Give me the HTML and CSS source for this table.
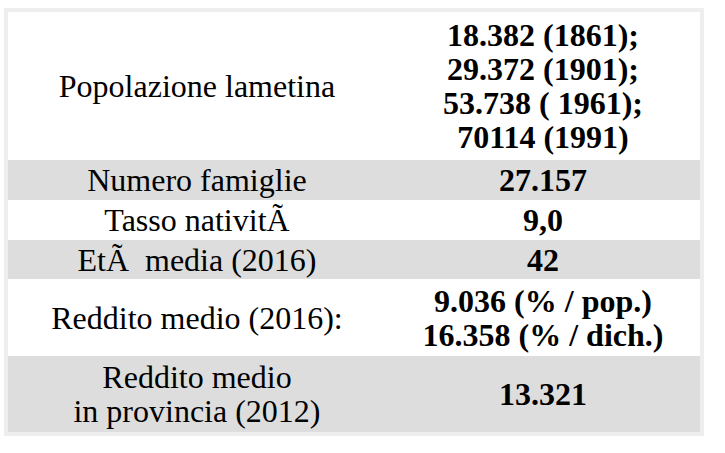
FILE: index.html
```html
<!DOCTYPE html>
<html lang="it">
<head>
<meta charset="utf-8">
<title>Lamezia Terme - dati</title>
<link rel="stylesheet" href="styles.css">
</head>
<body>
<div class="frame">
  <table class="data">
    <colgroup><col class="c-label"><col class="c-value"></colgroup>
    <tr class="r1">
      <td class="label">Popolazione lametina</td>
      <td class="value">18.382 (1861);<br>29.372 (1901);<br>53.738 ( 1961);<br>70114 (1991)</td>
    </tr>
    <tr class="r2 shade">
      <td class="label">Numero famiglie</td>
      <td class="value">27.157</td>
    </tr>
    <tr class="r3">
      <td class="label">Tasso nativitÃ</td>
      <td class="value">9,0</td>
    </tr>
    <tr class="r4 shade">
      <td class="label">EtÃ&nbsp; media (2016)</td>
      <td class="value">42</td>
    </tr>
    <tr class="r5">
      <td class="label">Reddito medio (2016):</td>
      <td class="value">9.036 (% / pop.)<br>16.358 (% / dich.)</td>
    </tr>
    <tr class="r6 shade">
      <td class="label">Reddito medio<br>in provincia (2012)</td>
      <td class="value">13.321</td>
    </tr>
  </table>
</div>
</body>
</html>
```
FILE: styles.css
```css
html, body {
  margin: 0;
  padding: 0;
  background: #ffffff;
}

.frame {
  margin: 8px 0 0 4px;
  width: 692px;
  padding: 4px;
  background: #eeeeee;
}

.data {
  width: 692px;
  border-collapse: collapse;
  border-spacing: 0;
  background: #ffffff;
  font-family: "Liberation Serif", "Times New Roman", serif;
  color: #000000;
  table-layout: fixed;
}

.c-label { width: 378px; }
.c-value { width: 314px; }

.data td {
  padding: 0;
  text-align: center;
  vertical-align: middle;
  font-size: 32px;
  line-height: 34px;
}

.label { font-weight: normal; }
.value { font-weight: bold; }

.shade td { background: #dddddd; }

.r1 { height: 148px; }
.r2 { height: 40px; }
.r3 { height: 40px; }
.r4 { height: 39px; }
.r5 { height: 77px; }
.r6 { height: 76px; }
```
